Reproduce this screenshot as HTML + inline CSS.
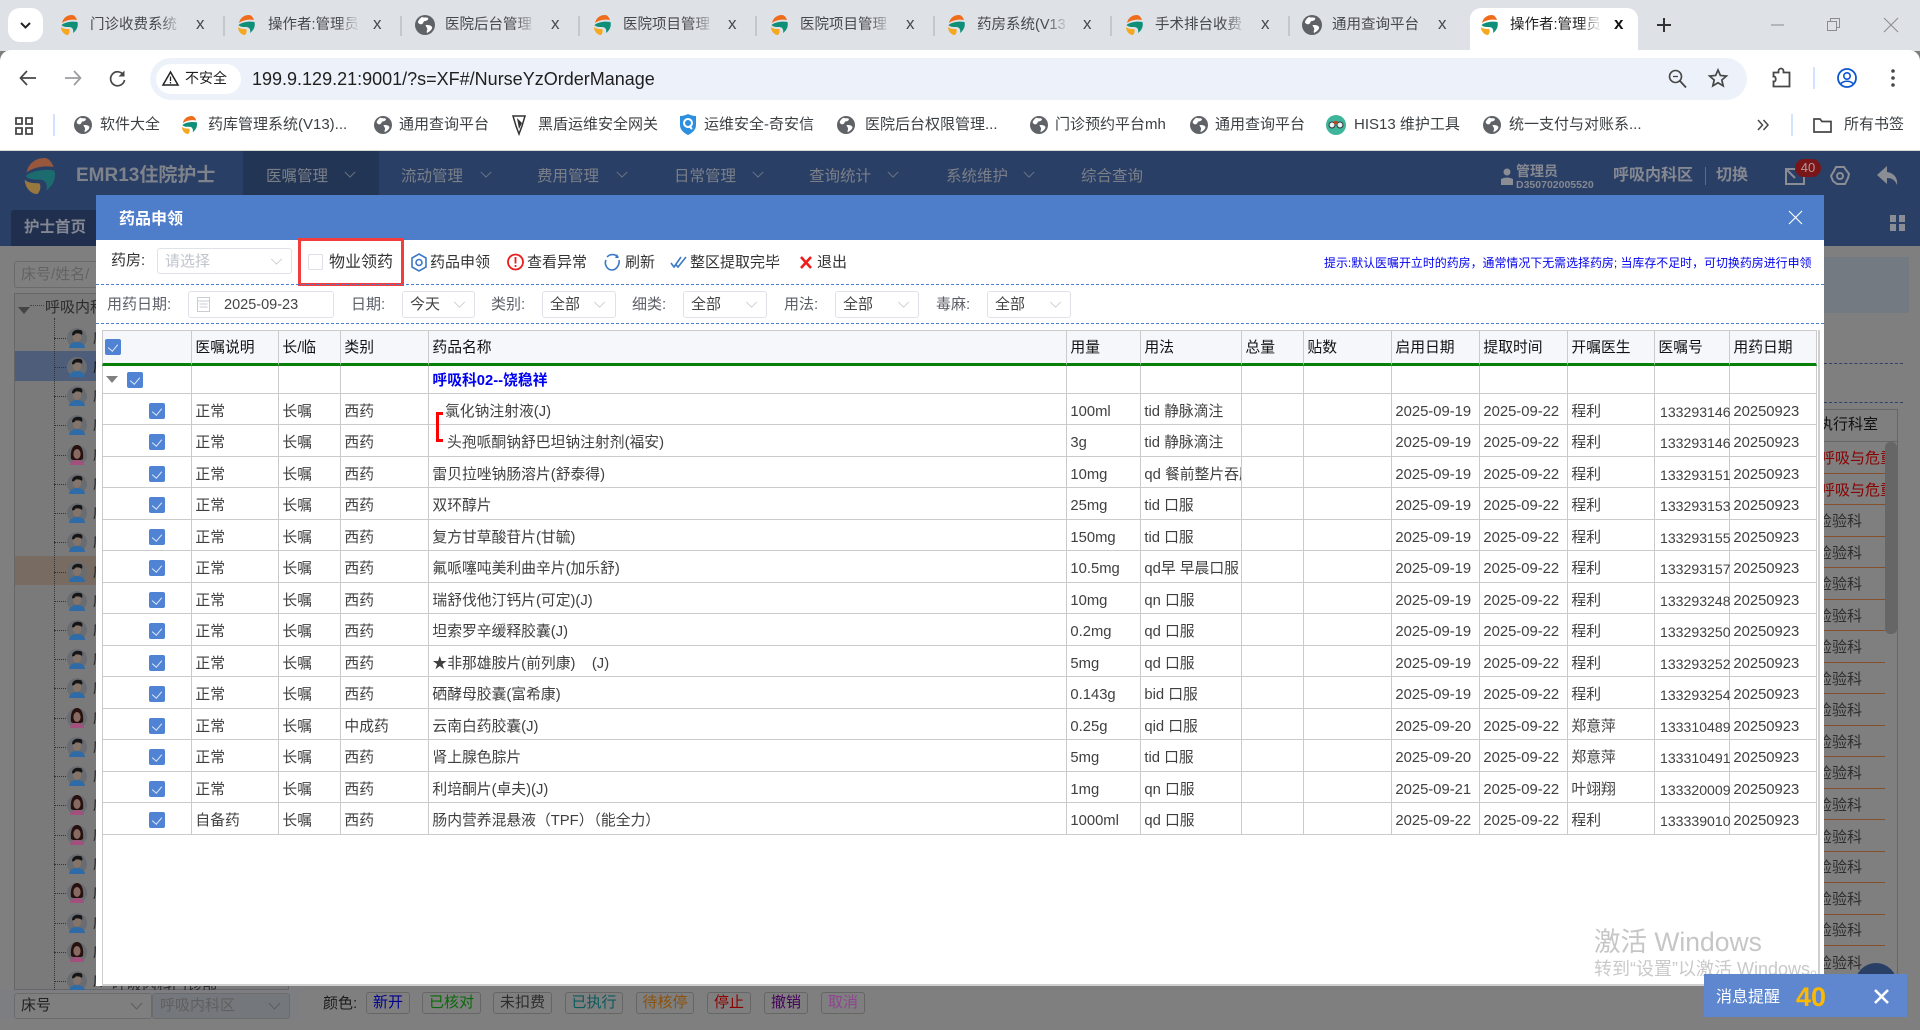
<!DOCTYPE html>
<html lang="zh"><head><meta charset="utf-8"><title>药品申领</title>
<style>
*{box-sizing:border-box}
html,body{margin:0;padding:0}
body{width:1920px;height:1030px;overflow:hidden;position:relative;background:#7f7f7f;font-family:"Liberation Sans","WenQuanYi Zen Hei","Noto Sans CJK SC",sans-serif;font-size:15px;color:#333}
.a{position:absolute;white-space:nowrap;line-height:20px}
svg{display:block}
svg.a{overflow:visible}
.tt{font-size:14.5px;color:#45484c;width:92px;overflow:hidden;top:15px;-webkit-mask-image:linear-gradient(90deg,#000 75%,transparent 100%);mask-image:linear-gradient(90deg,#000 75%,transparent 100%)}
.tx{font-size:17px;color:#45484c;top:14px}
.ts{width:2px;height:20px;background:#c4c7cc;top:16px}
.bm{font-size:15px;color:#3c4043;top:115px}
.mn{font-size:15.5px;color:#7b7f88;top:167px}
.sel{position:absolute;background:#fff;border:1.5px solid #dfe2e9;border-radius:3px}
.f{font-size:15px;color:#5c5f66;top:295px}
.v{font-size:15px;color:#444;top:295px}
.leg{position:absolute;top:992px;height:22px;line-height:20px;text-align:center;border:1.5px solid #666;border-radius:3px;font-size:15px;background:#7f7f7f}
.rl{position:absolute;left:1824px;width:61px;height:1px;background:#86502e}
.rt{position:absolute;left:1817px;font-size:15px;line-height:20px;white-space:nowrap;color:#2e2e2e}
#modal{position:absolute;left:96px;top:195px;width:1728px;height:791px;background:#fff}
table{position:absolute;left:102px;top:330px;width:1715px;table-layout:fixed;border-collapse:separate;border-spacing:0;font-size:14.8px;color:#404040}
th,td{padding:5px 0 0 3.4px;border-right:1px solid #cbcbcb;border-bottom:1px solid #cbcbcb;white-space:nowrap;overflow:hidden;font-weight:400;text-align:left;vertical-align:middle;line-height:20px}
th{background:#f5f7fb;color:#111;border-bottom:3px solid #078007;border-top:1px solid #cbcbcb;padding-top:2px}
th:first-child,td:first-child{border-left:1px solid #cbcbcb}
td:nth-child(13){font-size:14.1px;padding-left:5px;overflow:visible}
tr.g td{padding-top:2px}
.cb{display:inline-block;width:16px;height:16px;background:#5183d4;border-radius:2px;position:relative;vertical-align:middle}
.cb:after{content:"";position:absolute;left:5px;top:3px;width:5px;height:8px;border:solid #dfe9fa;border-width:0 1.3px 1.3px 0;transform:rotate(40deg)}
td.c1{padding:3px 0 0 46px}
</style></head><body>
<svg width="0" height="0" style="position:absolute"><defs>
<symbol id="logo" viewBox="0 0 20 20"><path d="M12 0C7 0 3 3 2 8 6 5 12 4 17 5 16 2 14 0 12 0z" fill="#ef6c1a"/><path d="M1.500 10C5 7 12 6 17.500 7 18.500 11 17 15 13 18 14 14 12 12 9 12 6 12 3 12 1.500 10z" fill="#0f8f78"/><path d="M1 12C3 14 6 14 9 14 10 15 10 18 8 20 4 20 1 16 1 12z" fill="#f5a821"/></symbol>
<symbol id="globe" viewBox="0 0 20 20"><circle cx="10" cy="10" r="10" fill="#5f6368"/><path d="M7 2c2 1 5 0 6 1s-1 3-3 3-1 2-3 3S3 8 3 7s2-4 4-5zm4 8c2 0 5 0 6 2s-3 5-5 6c-1-2 1-3 0-5s-2-3-1-3z" fill="#fff"/></symbol>
<symbol id="m" viewBox="0 0 20 20"><circle cx="10" cy="10" r="10" fill="#696c71"/><path d="M2 20c0-4 4-6 8-6s8 2 8 6z" fill="#2f6ba6"/><ellipse cx="10" cy="9" rx="4.2" ry="5" fill="#84746a"/><path d="M5 7c0-4 4-6 8-5 2 0 3 2 2 5-2-2-6-2-7-1 0 1-2 2-3 1z" fill="#151515"/></symbol>
<symbol id="f" viewBox="0 0 20 20"><circle cx="10" cy="10" r="10" fill="#696c71"/><path d="M4 14C3 5 6 0 10 0s7 5 6 14l-2 1H6z" fill="#26110f"/><path d="M3 20c0-3 3-5 7-5s7 2 7 5z" fill="#a3507f"/><ellipse cx="10" cy="9" rx="3.6" ry="5" fill="#876a62"/></symbol>
<symbol id="ch" viewBox="0 0 14 8"><path d="M1 1l6 6 6-6" fill="none" stroke="#c3c7cf" stroke-width="1"/></symbol>
<symbol id="chd" viewBox="0 0 14 8"><path d="M1 1l6 6 6-6" fill="none" stroke="#6d7482" stroke-width="1.2"/></symbol>
</defs></svg>

<!-- browser chrome -->
<div class="a" style="left:0;top:0;width:1920px;height:51px;background:#dee1e6"></div>
<div class="a" style="left:8px;top:8px;width:35px;height:34px;background:#fff;border-radius:12px"></div>
<svg class="a" style="left:20px;top:22px" width="11" height="7" viewBox="0 0 11 7"><path d="M1 1l4.5 4.5L10 1" fill="none" stroke="#222" stroke-width="2"/></svg>
<div class="a" style="left:1470px;top:8px;width:168px;height:43px;background:#fff;border-radius:11px 11px 0 0"></div>

<svg class="a" style="left:60px;top:15px" width="20" height="20"><use href="#logo"/></svg><div class="a tt" style="left:90px">门诊收费系统</div><div class="a tx" style="left:196px">x</div><div class="a ts" style="left:223px"></div>
<svg class="a" style="left:237px;top:15px" width="20" height="20"><use href="#logo"/></svg><div class="a tt" style="left:268px">操作者:管理员</div><div class="a tx" style="left:373px">x</div><div class="a ts" style="left:400px"></div>
<svg class="a" style="left:415px;top:15px" width="20" height="20"><use href="#globe"/></svg><div class="a tt" style="left:445px">医院后台管理</div><div class="a tx" style="left:551px">x</div><div class="a ts" style="left:578px"></div>
<svg class="a" style="left:593px;top:15px" width="20" height="20"><use href="#logo"/></svg><div class="a tt" style="left:623px">医院项目管理</div><div class="a tx" style="left:728px">x</div><div class="a ts" style="left:755px"></div>
<svg class="a" style="left:770px;top:15px" width="20" height="20"><use href="#logo"/></svg><div class="a tt" style="left:800px">医院项目管理</div><div class="a tx" style="left:906px">x</div><div class="a ts" style="left:933px"></div>
<svg class="a" style="left:947px;top:15px" width="20" height="20"><use href="#logo"/></svg><div class="a tt" style="left:977px">药房系统(V13</div><div class="a tx" style="left:1083px">x</div><div class="a ts" style="left:1110px"></div>
<svg class="a" style="left:1125px;top:15px" width="20" height="20"><use href="#logo"/></svg><div class="a tt" style="left:1155px">手术排台收费</div><div class="a tx" style="left:1261px">x</div><div class="a ts" style="left:1288px"></div>
<svg class="a" style="left:1302px;top:15px" width="20" height="20"><use href="#globe"/></svg><div class="a tt" style="left:1332px;-webkit-mask-image:none;mask-image:none">通用查询平台</div><div class="a tx" style="left:1438px">x</div>
<svg class="a" style="left:1480px;top:15px" width="20" height="20"><use href="#logo"/></svg><div class="a tt" style="left:1510px;color:#1f1f1f">操作者:管理员</div><div class="a tx" style="left:1614px;color:#111;font-weight:700">x</div>
<svg class="a" style="left:1657px;top:18px" width="14" height="14"><path d="M7 0v14M0 7h14" stroke="#333" stroke-width="2"/></svg>
<svg class="a" style="left:1771px;top:24px" width="13" height="2"><path d="M0 1h13" stroke="#8a8c90"/></svg>
<svg class="a" style="left:1827px;top:18px" width="13" height="13"><path d="M.5 3.5h9v9h-9zM3.5 3.5v-3h9v9h-3" fill="none" stroke="#8a8c90"/></svg>
<svg class="a" style="left:1884px;top:18px" width="14" height="14"><path d="M0 0l14 14M14 0L0 14" stroke="#8a8c90"/></svg>

<div class="a" style="left:0;top:50px;width:1920px;height:101px;background:#fff;border-radius:11px 11px 0 0"></div>
<svg class="a" style="left:19px;top:70px" width="18" height="16"><path d="M8 1L1.5 8 8 15M2 8h15" fill="none" stroke="#474747" stroke-width="1.7"/></svg>
<svg class="a" style="left:64px;top:70px" width="18" height="16"><path d="M10 1l6.5 7-6.5 7M16 8H1" fill="none" stroke="#9a9c9f" stroke-width="1.7"/></svg>
<svg class="a" style="left:109px;top:70px" width="17" height="17"><path d="M14.5 5A7 7 0 1 0 15.500 10" fill="none" stroke="#474747" stroke-width="1.7"/><path d="M15.500 0.500v6h-6z" fill="#474747"/></svg>
<div class="a" style="left:150px;top:58px;width:1597px;height:42px;background:#edf2fa;border-radius:21px"></div>
<div class="a" style="left:156px;top:64px;width:85px;height:30px;background:#fff;border-radius:15px"></div>
<svg class="a" style="left:162px;top:71px" width="17" height="15"><path d="M8.500 1L16 14H1z" fill="none" stroke="#222" stroke-width="1.500"/><path d="M8.500 5.500v4.500M8.500 11v1.500" stroke="#222" stroke-width="1.300"/></svg>
<div class="a" style="left:185px;top:68px;font-size:14px;color:#1f1f1f">不安全</div>
<div class="a" style="left:252px;top:68px;font-size:18px;line-height:22px;color:#1f1f1f">199.9.129.21:9001/?s=XF#/NurseYzOrderManage</div>
<svg class="a" style="left:1668px;top:69px" width="19" height="19"><circle cx="7.500" cy="7.500" r="6" fill="none" stroke="#474747" stroke-width="1.600"/><path d="M12 12l6 6.500" stroke="#474747" stroke-width="1.800"/><path d="M5 7.500h5" stroke="#474747" stroke-width="1.300"/></svg>
<svg class="a" style="left:1708px;top:68px" width="20" height="20" viewBox="0 0 20 20"><path d="M10 2l2.400 5.500 6 .5-4.600 4 1.400 5.900L10 14.800 4.800 17.900 6.200 12 1.600 8l6-.5z" fill="none" stroke="#474747" stroke-width="1.700"/></svg>
<svg class="a" style="left:1772px;top:68px" width="19" height="20" viewBox="0 0 19 20"><path d="M1.500 4.500h5V3a2.500 2.500 0 0 1 5 0v1.500h6v14h-16v-5c3 1 3-6 0-5z" fill="none" stroke="#474747" stroke-width="1.800"/></svg>
<div class="a" style="left:1813px;top:67px;width:2px;height:22px;background:#d3e3fd"></div>
<svg class="a" style="left:1837px;top:68px" width="20" height="20" viewBox="0 0 20 20"><circle cx="10" cy="10" r="9" fill="none" stroke="#0b57d0" stroke-width="1.800"/><circle cx="10" cy="8" r="3.200" fill="none" stroke="#0b57d0" stroke-width="1.600"/><path d="M4 15.500c3-3 9-3 12 0" fill="none" stroke="#0b57d0" stroke-width="1.600"/></svg>
<svg class="a" style="left:1891px;top:69px" width="4" height="18"><circle cx="2" cy="2" r="1.800" fill="#474747"/><circle cx="2" cy="9" r="1.800" fill="#474747"/><circle cx="2" cy="16" r="1.800" fill="#474747"/></svg>

<!-- bookmarks -->
<svg class="a" style="left:15px;top:117px" width="18" height="18"><path d="M1 1h6v6H1zM11 1h6v6h-6zM1 11h6v6H1zM11 11h6v6h-6z" fill="none" stroke="#474747" stroke-width="1.800"/></svg>
<div class="a" style="left:53px;top:114px;width:2px;height:22px;background:#d3e3fd"></div>
<svg class="a" style="left:74px;top:116px" width="18" height="18"><use href="#globe"/></svg><div class="a bm" style="left:100px">软件大全</div>
<svg class="a" style="left:181px;top:116px" width="18" height="18"><use href="#logo"/></svg><div class="a bm" style="left:208px">药库管理系统(V13)...</div>
<svg class="a" style="left:374px;top:116px" width="18" height="18"><use href="#globe"/></svg><div class="a bm" style="left:399px">通用查询平台</div>
<svg class="a" style="left:511px;top:114px" width="16" height="22" viewBox="0 0 16 22"><path d="M2 2h12l-3 10-3 8-3-8z" fill="none" stroke="#333" stroke-width="1.500"/><path d="M6 4l5 5-3 6z" fill="#333"/></svg><div class="a bm" style="left:538px">黑盾运维安全网关</div>
<svg class="a" style="left:679px;top:114px" width="18" height="21" viewBox="0 0 18 21"><path d="M1 2c3 0 6-1 8-2 2 1 5 2 8 2v9c0 5-4 8-8 10-4-2-8-5-8-10z" fill="#2d8fe0"/><circle cx="9" cy="9" r="4" fill="none" stroke="#fff" stroke-width="2"/><path d="M10 12l3 3" stroke="#fff" stroke-width="2"/></svg><div class="a bm" style="left:704px">运维安全-奇安信</div>
<svg class="a" style="left:837px;top:116px" width="18" height="18"><use href="#globe"/></svg><div class="a bm" style="left:865px">医院后台权限管理...</div>
<svg class="a" style="left:1030px;top:116px" width="18" height="18"><use href="#globe"/></svg><div class="a bm" style="left:1055px">门诊预约平台mh</div>
<svg class="a" style="left:1190px;top:116px" width="18" height="18"><use href="#globe"/></svg><div class="a bm" style="left:1215px">通用查询平台</div>
<svg class="a" style="left:1326px;top:115px" width="20" height="20"><circle cx="10" cy="10" r="10" fill="#3fb59b"/><circle cx="6" cy="10" r="3" fill="#e8f5f2" stroke="#333"/><circle cx="14" cy="10" r="3" fill="#e8f5f2" stroke="#333"/><path d="M8 6h4v3H8z" fill="#b5472b"/></svg><div class="a bm" style="left:1354px">HIS13 维护工具</div>
<svg class="a" style="left:1483px;top:116px" width="18" height="18"><use href="#globe"/></svg><div class="a bm" style="left:1509px">统一支付与对账系...</div>
<svg class="a" style="left:1757px;top:119px" width="12" height="12"><path d="M1 1l4.500 5L1 11M6.500 1l4.500 5-4.500 5" fill="none" stroke="#474747" stroke-width="1.500"/></svg>
<div class="a" style="left:1791px;top:114px;width:2px;height:22px;background:#d3e3fd"></div>
<svg class="a" style="left:1813px;top:117px" width="19" height="16"><path d="M1 2h6l2 2.500h9V15H1z" fill="none" stroke="#474747" stroke-width="1.700"/></svg>
<div class="a bm" style="left:1844px">所有书签</div>
<div class="a" style="left:0;top:150px;width:1920px;height:1px;background:#d8d8d4"></div>

<!-- app header -->
<div class="a" style="left:0;top:151px;width:1920px;height:95px;background:#2a3f66"></div>
<svg class="a" style="left:23px;top:158px;opacity:.55" width="36" height="36"><use href="#logo"/></svg>
<div class="a" style="left:76px;top:165px;font-size:19px;line-height:22px;color:#7e828b;font-weight:700">EMR13住院护士</div>
<div class="a" style="left:243px;top:151px;width:136px;height:44px;background:#233554"></div>
<div class="a mn" style="left:266px">医嘱管理</div><svg class="a" style="left:344px;top:171px" width="12" height="7"><use href="#chd"/></svg>
<div class="a mn" style="left:401px">流动管理</div><svg class="a" style="left:480px;top:171px" width="12" height="7"><use href="#chd"/></svg>
<div class="a mn" style="left:537px">费用管理</div><svg class="a" style="left:616px;top:171px" width="12" height="7"><use href="#chd"/></svg>
<div class="a mn" style="left:674px">日常管理</div><svg class="a" style="left:752px;top:171px" width="12" height="7"><use href="#chd"/></svg>
<div class="a mn" style="left:809px">查询统计</div><svg class="a" style="left:887px;top:171px" width="12" height="7"><use href="#chd"/></svg>
<div class="a mn" style="left:946px">系统维护</div><svg class="a" style="left:1023px;top:171px" width="12" height="7"><use href="#chd"/></svg>
<div class="a mn" style="left:1081px">综合查询</div>
<svg class="a" style="left:1501px;top:168px" width="12" height="17"><circle cx="6" cy="4" r="3.500" fill="#8a8d94"/><path d="M0 17V11q6-3 12 0v6z" fill="#8a8d94"/></svg>
<div class="a" style="left:1516px;top:161px;font-size:14px;color:#858891;font-weight:700">管理员</div>
<div class="a" style="left:1516px;top:175px;font-size:10.500px;color:#858891;font-weight:700">D350702005520</div>
<div class="a" style="left:1613px;top:166px;font-size:16px;color:#858891;font-weight:700">呼吸内科区</div>
<div class="a" style="left:1705px;top:167px;width:1px;height:18px;background:#5c6a85"></div>
<div class="a" style="left:1716px;top:166px;font-size:16px;color:#858891;font-weight:700">切换</div>
<svg class="a" style="left:1785px;top:168px" width="20" height="17"><path d="M1 1h18v15H1zM1 1l9 9" fill="none" stroke="#8a8d94" stroke-width="2"/></svg>
<div class="a" style="left:1795px;top:159px;width:26px;height:18px;line-height:18px;background:#7a1518;border-radius:9px;text-align:center;font-size:13px;color:#b69a9a">40</div>
<svg class="a" style="left:1830px;top:166px" width="20" height="20" viewBox="0 0 20 20"><path d="M6 1h8l2 3 3 4-1 4-3 6H7l-4-3-2-5 3-5z" fill="none" stroke="#8a8d94" stroke-width="2"/><circle cx="10" cy="10" r="3" fill="none" stroke="#8a8d94" stroke-width="2"/></svg>
<svg class="a" style="left:1877px;top:166px" width="21" height="19" viewBox="0 0 21 19"><path d="M0 9l10-9v6c7 1 11 6 10 13-2-5-5-7-10-7v6z" fill="#8a8d94"/></svg>
<div class="a" style="left:11px;top:210px;width:85px;height:36px;background:#1f2f4d;border-radius:3px 0 0 0"></div>
<div class="a" style="left:24px;top:218px;font-size:15.500px;color:#838793;font-weight:700">护士首页</div>
<svg class="a" style="left:1890px;top:215px" width="15" height="16"><path d="M0 0h6v7H0zM9 0h6v7H9zM0 9h6v7H0zM9 9h6v7H9z" fill="#8a8d94"/></svg>

<!-- background left panel -->
<div class="a" style="left:14px;top:261px;width:90px;height:27px;border:1.500px solid #6b6b6b;border-radius:3px"></div>
<div class="a" style="left:21px;top:265px;font-size:15px;color:#636363;width:75px;overflow:hidden">床号/姓名/</div>
<div class="a" style="left:14px;top:293px;width:275px;height:697px;border:1px solid #666;background:#7a7a7a"></div>
<div class="a" style="left:15px;top:351px;width:90px;height:30px;background:#4e5d79"></div>
<div class="a" style="left:15px;top:556px;width:90px;height:29px;background:#776b62"></div>
<svg class="a" style="left:18px;top:307px" width="12" height="7"><path d="M0 0h12L6 7z" fill="#444"/></svg>
<div class="a" style="left:30px;top:305px;width:14px;border-top:1px dotted #444"></div>
<div class="a" style="left:45px;top:298px;font-size:15px;color:#2b2b2b">呼吸内科</div>
<div class="a" style="left:54px;top:318px;height:672px;border-left:1px dotted #333"></div>
<div id="avatars">
<svg class="a" style="left:67px;top:328px" width="20" height="20"><use href="#m"/></svg><div class="a" style="left:54px;top:338px;width:12px;border-top:1px dotted #333"></div><div class="a" style="left:93px;top:328px;font-size:14px;color:#222">床</div>
<svg class="a" style="left:67px;top:357px" width="20" height="20"><use href="#m"/></svg><div class="a" style="left:54px;top:367px;width:12px;border-top:1px dotted #333"></div><div class="a" style="left:93px;top:357px;font-size:14px;color:#111">床</div>
<svg class="a" style="left:67px;top:386px" width="20" height="20"><use href="#m"/></svg><div class="a" style="left:54px;top:396px;width:12px;border-top:1px dotted #333"></div><div class="a" style="left:93px;top:386px;font-size:14px;color:#222">床</div>
<svg class="a" style="left:67px;top:415px" width="20" height="20"><use href="#m"/></svg><div class="a" style="left:54px;top:425px;width:12px;border-top:1px dotted #333"></div><div class="a" style="left:93px;top:415px;font-size:14px;color:#222">床</div>
<svg class="a" style="left:67px;top:445px" width="20" height="20"><use href="#f"/></svg><div class="a" style="left:54px;top:455px;width:12px;border-top:1px dotted #333"></div><div class="a" style="left:93px;top:445px;font-size:14px;color:#222">床</div>
<svg class="a" style="left:67px;top:474px" width="20" height="20"><use href="#m"/></svg><div class="a" style="left:54px;top:484px;width:12px;border-top:1px dotted #333"></div><div class="a" style="left:93px;top:474px;font-size:14px;color:#222">床</div>
<svg class="a" style="left:67px;top:503px" width="20" height="20"><use href="#m"/></svg><div class="a" style="left:54px;top:513px;width:12px;border-top:1px dotted #333"></div><div class="a" style="left:93px;top:503px;font-size:14px;color:#222">床</div>
<svg class="a" style="left:67px;top:532px" width="20" height="20"><use href="#m"/></svg><div class="a" style="left:54px;top:542px;width:12px;border-top:1px dotted #333"></div><div class="a" style="left:93px;top:532px;font-size:14px;color:#222">床</div>
<svg class="a" style="left:67px;top:562px" width="20" height="20"><use href="#m"/></svg><div class="a" style="left:54px;top:572px;width:12px;border-top:1px dotted #333"></div><div class="a" style="left:93px;top:562px;font-size:14px;color:#222">床</div>
<svg class="a" style="left:67px;top:591px" width="20" height="20"><use href="#m"/></svg><div class="a" style="left:54px;top:601px;width:12px;border-top:1px dotted #333"></div><div class="a" style="left:93px;top:591px;font-size:14px;color:#222">床</div>
<svg class="a" style="left:67px;top:620px" width="20" height="20"><use href="#m"/></svg><div class="a" style="left:54px;top:630px;width:12px;border-top:1px dotted #333"></div><div class="a" style="left:93px;top:620px;font-size:14px;color:#222">床</div>
<svg class="a" style="left:67px;top:649px" width="20" height="20"><use href="#m"/></svg><div class="a" style="left:54px;top:659px;width:12px;border-top:1px dotted #333"></div><div class="a" style="left:93px;top:649px;font-size:14px;color:#222">床</div>
<svg class="a" style="left:67px;top:678px" width="20" height="20"><use href="#m"/></svg><div class="a" style="left:54px;top:688px;width:12px;border-top:1px dotted #333"></div><div class="a" style="left:93px;top:678px;font-size:14px;color:#222">床</div>
<svg class="a" style="left:67px;top:708px" width="20" height="20"><use href="#f"/></svg><div class="a" style="left:54px;top:718px;width:12px;border-top:1px dotted #333"></div><div class="a" style="left:93px;top:708px;font-size:14px;color:#222">床</div>
<svg class="a" style="left:67px;top:737px" width="20" height="20"><use href="#m"/></svg><div class="a" style="left:54px;top:747px;width:12px;border-top:1px dotted #333"></div><div class="a" style="left:93px;top:737px;font-size:14px;color:#222">床</div>
<svg class="a" style="left:67px;top:766px" width="20" height="20"><use href="#m"/></svg><div class="a" style="left:54px;top:776px;width:12px;border-top:1px dotted #333"></div><div class="a" style="left:93px;top:766px;font-size:14px;color:#222">床</div>
<svg class="a" style="left:67px;top:795px" width="20" height="20"><use href="#f"/></svg><div class="a" style="left:54px;top:805px;width:12px;border-top:1px dotted #333"></div><div class="a" style="left:93px;top:795px;font-size:14px;color:#222">床</div>
<svg class="a" style="left:67px;top:825px" width="20" height="20"><use href="#f"/></svg><div class="a" style="left:54px;top:835px;width:12px;border-top:1px dotted #333"></div><div class="a" style="left:93px;top:825px;font-size:14px;color:#222">床</div>
<svg class="a" style="left:67px;top:854px" width="20" height="20"><use href="#m"/></svg><div class="a" style="left:54px;top:864px;width:12px;border-top:1px dotted #333"></div><div class="a" style="left:93px;top:854px;font-size:14px;color:#222">床</div>
<svg class="a" style="left:67px;top:883px" width="20" height="20"><use href="#f"/></svg><div class="a" style="left:54px;top:893px;width:12px;border-top:1px dotted #333"></div><div class="a" style="left:93px;top:883px;font-size:14px;color:#222">床</div>
<svg class="a" style="left:67px;top:913px" width="20" height="20"><use href="#m"/></svg><div class="a" style="left:54px;top:923px;width:12px;border-top:1px dotted #333"></div><div class="a" style="left:93px;top:913px;font-size:14px;color:#222">床</div>
<svg class="a" style="left:67px;top:942px" width="20" height="20"><use href="#f"/></svg><div class="a" style="left:54px;top:952px;width:12px;border-top:1px dotted #333"></div><div class="a" style="left:93px;top:942px;font-size:14px;color:#222">床</div>
<svg class="a" style="left:67px;top:971px" width="20" height="20"><use href="#m"/></svg><div class="a" style="left:54px;top:981px;width:12px;border-top:1px dotted #333"></div><div class="a" style="left:93px;top:971px;font-size:14px;color:#222;height:19px;overflow:hidden">床</div>
</div>
<div class="a" style="left:112px;top:976px;font-size:15px;color:#2b2b2b;height:14px;overflow:hidden">呼吸内科门诊部</div>
<div class="a" style="left:0;top:990px;width:299px;height:28px;background:#7c7e82"></div>
<div class="a" style="left:14px;top:993px;width:138px;height:26px;border:1.500px solid #6b6b6b;border-radius:3px;background:#7f7f7f"></div>
<div class="a" style="left:21px;top:996px;font-size:15px;color:#222">床号</div>
<svg class="a" style="left:130px;top:1002px" width="13" height="8"><path d="M1 1l5.500 6L12 1" fill="none" stroke="#5d5d5d"/></svg>
<div class="a" style="left:152px;top:993px;width:138px;height:26px;border:1.500px solid #6b6b6b;border-radius:3px;background:#74777c"></div>
<div class="a" style="left:160px;top:996px;font-size:15px;color:#5f5f5f">呼吸内科区</div>
<svg class="a" style="left:268px;top:1002px" width="13" height="8"><path d="M1 1l5.500 6L12 1" fill="none" stroke="#5d5d5d"/></svg>
<div class="a" style="left:323px;top:994px;font-size:15px;color:#1c1c1c">颜色:</div>
<div class="leg" style="left:366px;width:44px;color:#00008c">新开</div>
<div class="leg" style="left:422px;width:59px;color:#0a6a0a">已核对</div>
<div class="leg" style="left:493px;width:59px;color:#2c2c2c">未扣费</div>
<div class="leg" style="left:565px;width:58px;color:#0a5a5c">已执行</div>
<div class="leg" style="left:636px;width:58px;color:#8a520b">待核停</div>
<div class="leg" style="left:707px;width:44px;color:#8c0000">停止</div>
<div class="leg" style="left:764px;width:44px;color:#46005c">撤销</div>
<div class="leg" style="left:821px;width:44px;color:#904392">取消</div>

<!-- background right panel -->
<div class="a" style="left:1824px;top:257px;width:85px;height:56px;background:#747a82"></div>
<div class="a" style="left:1824px;top:363px;width:79px;border-top:1px dashed #2f4268"></div>
<div class="a" style="left:1824px;top:402px;width:79px;border-top:1px dashed #2f4268"></div>
<div class="a" style="left:1800px;top:409px;width:98px;height:581px;border:1px solid #666"></div>
<div class="a" style="left:1800px;top:441px;width:98px;height:1px;background:#666"></div>
<div class="a" style="left:1818px;top:415px;font-size:15px;color:#111">执行科室</div>
<div class="rt" style="top:449px;left:1820px;width:65px;overflow:hidden;color:#8a0000">呼吸与危重</div>
<div class="rl" style="top:473px"></div>
<div class="rt" style="top:481px;left:1820px;width:65px;overflow:hidden;color:#8a0000">呼吸与危重</div>
<div class="rl" style="top:504px"></div>
<div class="rt" style="top:512px">检验科</div><div class="rl" style="top:536px"></div>
<div class="rt" style="top:544px">检验科</div><div class="rl" style="top:567px"></div>
<div class="rt" style="top:575px">检验科</div><div class="rl" style="top:599px"></div>
<div class="rt" style="top:607px">检验科</div><div class="rl" style="top:630px"></div>
<div class="rt" style="top:638px">检验科</div><div class="rl" style="top:662px"></div>
<div class="rt" style="top:670px">检验科</div><div class="rl" style="top:693px"></div>
<div class="rt" style="top:701px">检验科</div><div class="rl" style="top:725px"></div>
<div class="rt" style="top:733px">检验科</div><div class="rl" style="top:756px"></div>
<div class="rt" style="top:764px">检验科</div><div class="rl" style="top:788px"></div>
<div class="rt" style="top:796px">检验科</div><div class="rl" style="top:819px"></div>
<div class="rt" style="top:828px">检验科</div><div class="rl" style="top:851px"></div>
<div class="rt" style="top:858px">检验科</div><div class="rl" style="top:882px"></div>
<div class="rt" style="top:890px">检验科</div><div class="rl" style="top:914px"></div>
<div class="rt" style="top:921px">检验科</div><div class="rl" style="top:945px"></div>
<div class="rt" style="top:954px">检验科</div>
<div class="a" style="left:1885px;top:442px;width:12px;height:192px;background:#666;border-radius:5px"></div>
<div class="a" style="left:1855px;top:963px;width:42px;height:42px;background:#2a3f66;border-radius:50%"></div>

<!-- modal -->
<div id="modal"></div>
<div class="a" style="left:96px;top:195px;width:1728px;height:45px;background:#4e7dca"></div>
<div class="a" style="left:119px;top:210px;font-size:16px;color:#fff;font-weight:700">药品申领</div>
<svg class="a" style="left:1789px;top:211px" width="13" height="13"><path d="M0 0l13 13M13 0L0 13" stroke="#fff" stroke-width="1.200"/></svg>

<div class="a" style="left:111px;top:251px;font-size:15px;color:#333">药房:</div>
<div class="sel" style="left:157px;top:248px;width:135px;height:26px"></div>
<div class="a" style="left:165px;top:252px;font-size:15px;color:#c0c4cc">请选择</div>
<svg class="a" style="left:270px;top:258px" width="13" height="7"><use href="#ch"/></svg>
<div class="a" style="left:298px;top:238px;width:106px;height:48px;border:3px solid #f33c3c"></div>
<div class="a" style="left:308px;top:254px;width:15px;height:16px;border:1.500px solid #dcdfe6;border-radius:2px;background:#fff"></div>
<div class="a" style="left:329px;top:253px;font-size:16px;color:#333">物业领药</div>
<svg class="a" style="left:410px;top:253px" width="18" height="19" viewBox="0 0 18 19"><path d="M9 1l7 4v9l-7 4-7-4V5z" fill="none" stroke="#3b79c8" stroke-width="1.600"/><circle cx="9" cy="9.500" r="3" fill="none" stroke="#3b79c8" stroke-width="1.600"/></svg>
<div class="a" style="left:430px;top:253px;font-size:15px;color:#333">药品申领</div>
<svg class="a" style="left:507px;top:253px" width="17" height="18"><circle cx="8.500" cy="9" r="7.500" fill="none" stroke="#ea1c1c" stroke-width="1.800"/><path d="M8.500 4v6.500M8.500 12v2" stroke="#ea1c1c" stroke-width="1.800"/></svg>
<div class="a" style="left:527px;top:253px;font-size:15px;color:#333">查看异常</div>
<svg class="a" style="left:604px;top:253px" width="17" height="18" viewBox="0 0 17 18"><path d="M3 4a7.500 7.500 0 0 1 11 0M15 7c1 5-3 10-7 10M8 17C3 17 0 11 2 7" fill="none" stroke="#3b79c8" stroke-width="1.600"/><path d="M13 1l2 4-4 0z" fill="#3b79c8"/></svg>
<div class="a" style="left:625px;top:253px;font-size:15px;color:#333">刷新</div>
<svg class="a" style="left:670px;top:256px" width="17" height="12"><path d="M1 7l3 4L11 1M6 9l2 2 8-10" fill="none" stroke="#3b79c8" stroke-width="1.600"/></svg>
<div class="a" style="left:690px;top:253px;font-size:15px;color:#333">整区提取完毕</div>
<svg class="a" style="left:800px;top:256px" width="12" height="13"><path d="M1 1l10 11M11 1L1 12" stroke="#ee1c1c" stroke-width="2.600"/></svg>
<div class="a" style="left:817px;top:253px;font-size:15px;color:#333">退出</div>
<div class="a" style="left:1324px;top:253px;font-size:11.950px;color:#0000f0">提示:默认医嘱开立时的药房，通常情况下无需选择药房; 当库存不足时，可切换药房进行申领</div>
<div class="a" style="left:96px;top:284px;width:1728px;border-top:1px dashed #4a7fcf"></div>
<div class="a" style="left:96px;top:323px;width:1728px;border-top:1px dashed #4a7fcf"></div>

<div class="a f" style="left:107px">用药日期:</div>
<div class="sel" style="left:188px;top:291px;width:146px;height:27px"></div>
<svg class="a" style="left:197px;top:296px" width="13" height="16"><path d="M.5 1.500h12v14H.5zM.5 5h12M2.500 8h8M2.500 11h8" fill="none" stroke="#c9ccd3"/></svg>
<div class="a v" style="left:224px;font-size:14.500px">2025-09-23</div>
<div class="a f" style="left:351px">日期:</div>
<div class="sel" style="left:402px;top:291px;width:73px;height:27px"></div><div class="a v" style="left:410px">今天</div><svg class="a" style="left:453px;top:301px" width="13" height="7"><use href="#ch"/></svg>
<div class="a f" style="left:491px">类别:</div>
<div class="sel" style="left:542px;top:291px;width:74px;height:27px"></div><div class="a v" style="left:550px">全部</div><svg class="a" style="left:593px;top:301px" width="13" height="7"><use href="#ch"/></svg>
<div class="a f" style="left:632px">细类:</div>
<div class="sel" style="left:683px;top:291px;width:84px;height:27px"></div><div class="a v" style="left:691px">全部</div><svg class="a" style="left:745px;top:301px" width="13" height="7"><use href="#ch"/></svg>
<div class="a f" style="left:784px">用法:</div>
<div class="sel" style="left:835px;top:291px;width:84px;height:27px"></div><div class="a v" style="left:843px">全部</div><svg class="a" style="left:897px;top:301px" width="13" height="7"><use href="#ch"/></svg>
<div class="a f" style="left:936px">毒麻:</div>
<div class="sel" style="left:987px;top:291px;width:84px;height:27px"></div><div class="a v" style="left:995px">全部</div><svg class="a" style="left:1049px;top:301px" width="13" height="7"><use href="#ch"/></svg>

<!-- panel border -->
<div class="a" style="left:102px;top:330px;width:1718px;height:656px;border-right:2px solid #cfcfcf;border-bottom:2px solid #cfcfcf;border-left:1px solid #cfcfcf"></div>

<table>
<colgroup><col style="width:90px"><col style="width:87px"><col style="width:62px"><col style="width:88px"><col style="width:638px"><col style="width:74px"><col style="width:101px"><col style="width:62px"><col style="width:88px"><col style="width:88px"><col style="width:88px"><col style="width:87px"><col style="width:75px"><col style="width:87px"></colgroup>
<thead><tr style="height:36px"><th style="padding:0 0 0 2px"><span class="cb"></span></th><th>医嘱说明</th><th>长/临</th><th>类别</th><th>药品名称</th><th>用量</th><th>用法</th><th>总量</th><th>贴数</th><th>启用日期</th><th>提取时间</th><th>开嘱医生</th><th>医嘱号</th><th>用药日期</th></tr></thead>
<tbody>
<tr class="g" style="height:28px"><td style="padding:0 0 0 3px"><svg style="display:inline-block;vertical-align:middle;margin-right:9px" width="12" height="7"><path d="M0 0h12L6 7z" fill="#808080"/></svg><span class="cb"></span></td><td></td><td></td><td></td><td style="color:#0000f0;font-weight:700">呼吸科02--饶稳祥</td><td></td><td></td><td></td><td></td><td></td><td></td><td></td><td></td><td></td></tr>
<tr style="height:31px"><td class="c1"><span class="cb"></span></td><td>正常</td><td>长嘱</td><td>西药</td><td style="padding-left:16px">氯化钠注射液(J)</td><td>100ml</td><td>tid 静脉滴注</td><td></td><td></td><td>2025-09-19</td><td>2025-09-22</td><td>程利</td><td>133293146</td><td>20250923</td></tr>
<tr style="height:32px"><td class="c1"><span class="cb"></span></td><td>正常</td><td>长嘱</td><td>西药</td><td style="padding-left:18px">头孢哌酮钠舒巴坦钠注射剂(福安)</td><td>3g</td><td>tid 静脉滴注</td><td></td><td></td><td>2025-09-19</td><td>2025-09-22</td><td>程利</td><td>133293146</td><td>20250923</td></tr>
<tr style="height:31px"><td class="c1"><span class="cb"></span></td><td>正常</td><td>长嘱</td><td>西药</td><td>雷贝拉唑钠肠溶片(舒泰得)</td><td>10mg</td><td>qd 餐前整片吞服</td><td></td><td></td><td>2025-09-19</td><td>2025-09-22</td><td>程利</td><td>133293151</td><td>20250923</td></tr>
<tr style="height:32px"><td class="c1"><span class="cb"></span></td><td>正常</td><td>长嘱</td><td>西药</td><td>双环醇片</td><td>25mg</td><td>tid 口服</td><td></td><td></td><td>2025-09-19</td><td>2025-09-22</td><td>程利</td><td>133293153</td><td>20250923</td></tr>
<tr style="height:31px"><td class="c1"><span class="cb"></span></td><td>正常</td><td>长嘱</td><td>西药</td><td>复方甘草酸苷片(甘毓)</td><td>150mg</td><td>tid 口服</td><td></td><td></td><td>2025-09-19</td><td>2025-09-22</td><td>程利</td><td>133293155</td><td>20250923</td></tr>
<tr style="height:32px"><td class="c1"><span class="cb"></span></td><td>正常</td><td>长嘱</td><td>西药</td><td>氟哌噻吨美利曲辛片(加乐舒)</td><td>10.5mg</td><td>qd早 早晨口服</td><td></td><td></td><td>2025-09-19</td><td>2025-09-22</td><td>程利</td><td>133293157</td><td>20250923</td></tr>
<tr style="height:31px"><td class="c1"><span class="cb"></span></td><td>正常</td><td>长嘱</td><td>西药</td><td>瑞舒伐他汀钙片(可定)(J)</td><td>10mg</td><td>qn 口服</td><td></td><td></td><td>2025-09-19</td><td>2025-09-22</td><td>程利</td><td>133293248</td><td>20250923</td></tr>
<tr style="height:32px"><td class="c1"><span class="cb"></span></td><td>正常</td><td>长嘱</td><td>西药</td><td>坦索罗辛缓释胶囊(J)</td><td>0.2mg</td><td>qd 口服</td><td></td><td></td><td>2025-09-19</td><td>2025-09-22</td><td>程利</td><td>133293250</td><td>20250923</td></tr>
<tr style="height:31px"><td class="c1"><span class="cb"></span></td><td>正常</td><td>长嘱</td><td>西药</td><td>★非那雄胺片(前列康)&nbsp;&nbsp;&nbsp;&nbsp;(J)</td><td>5mg</td><td>qd 口服</td><td></td><td></td><td>2025-09-19</td><td>2025-09-22</td><td>程利</td><td>133293252</td><td>20250923</td></tr>
<tr style="height:32px"><td class="c1"><span class="cb"></span></td><td>正常</td><td>长嘱</td><td>西药</td><td>硒酵母胶囊(富希康)</td><td>0.143g</td><td>bid 口服</td><td></td><td></td><td>2025-09-19</td><td>2025-09-22</td><td>程利</td><td>133293254</td><td>20250923</td></tr>
<tr style="height:31px"><td class="c1"><span class="cb"></span></td><td>正常</td><td>长嘱</td><td>中成药</td><td>云南白药胶囊(J)</td><td>0.25g</td><td>qid 口服</td><td></td><td></td><td>2025-09-20</td><td>2025-09-22</td><td>郑意萍</td><td>133310489</td><td>20250923</td></tr>
<tr style="height:32px"><td class="c1"><span class="cb"></span></td><td>正常</td><td>长嘱</td><td>西药</td><td>肾上腺色腙片</td><td>5mg</td><td>tid 口服</td><td></td><td></td><td>2025-09-20</td><td>2025-09-22</td><td>郑意萍</td><td>133310491</td><td>20250923</td></tr>
<tr style="height:31px"><td class="c1"><span class="cb"></span></td><td>正常</td><td>长嘱</td><td>西药</td><td>利培酮片(卓夫)(J)</td><td>1mg</td><td>qn 口服</td><td></td><td></td><td>2025-09-21</td><td>2025-09-22</td><td>叶翊翔</td><td>133320009</td><td>20250923</td></tr>
<tr style="height:32px"><td class="c1"><span class="cb"></span></td><td>自备药</td><td>长嘱</td><td>西药</td><td>肠内营养混悬液（TPF）（能全力）</td><td>1000ml</td><td>qd 口服</td><td></td><td></td><td>2025-09-22</td><td>2025-09-22</td><td>程利</td><td>133339010</td><td>20250923</td></tr>
</tbody></table>
<div class="a" style="left:436px;top:412px;width:7px;height:30px;border-left:3px solid #f00;border-top:3px solid #f00;border-bottom:3px solid #f00"></div>

<!-- watermark & popup -->
<div class="a" style="left:1594px;top:926px;font-size:26.500px;line-height:32px;color:#c6c6c6">激活 Windows</div>
<div class="a" style="left:1594px;top:958px;font-size:18px;line-height:22px;color:#c9c9c9">转到“设置”以激活 Windows。</div>
<div class="a" style="left:1704px;top:974px;width:203px;height:43px;background:#5e87cf"></div>
<div class="a" style="left:1716px;top:988px;font-size:16px;color:#fff">消息提醒</div>
<div class="a" style="left:1796px;top:983px;font-size:27px;line-height:28px;font-weight:700;color:#fdb900">40</div>
<svg class="a" style="left:1874px;top:989px" width="15" height="15"><path d="M1 1l13 13M14 1L1 14" stroke="#fff" stroke-width="2.600"/></svg>
</body></html>
